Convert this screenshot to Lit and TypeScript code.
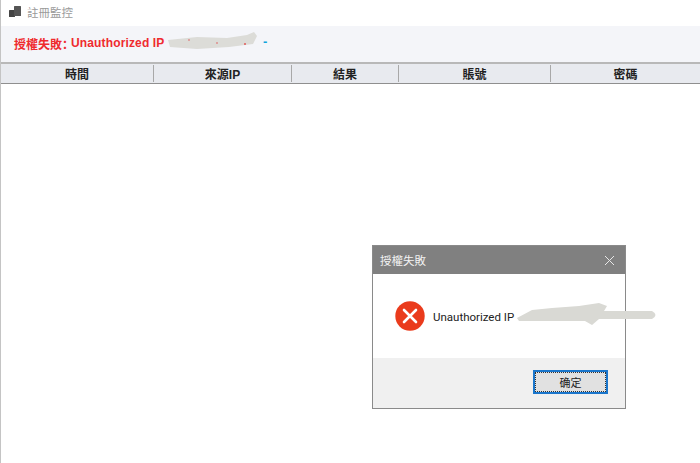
import { LitElement, html, css, svg } from "lit";
import { customElement } from "lit/decorators.js";

const COLS: [string, number][] = [
  ["時間", 153],
  ["來源IP", 138],
  ["結果", 107],
  ["賬號", 152],
  ["密碼", 149],
];

@customElement("app-root")
export class AppRoot extends LitElement {
  static styles = css`
    :host {
      display: block;
      position: relative;
      width: 700px;
      height: 463px;
      overflow: hidden;
      background: #fff;
      font-family: "Liberation Sans", "Noto Sans CJK TC", sans-serif;
      box-sizing: border-box;
      border-left: 1px solid #c4c4c4;
    }
    .title {
      height: 26px;
      display: flex;
      align-items: center;
      gap: 6px;
      padding: 0 0 3px 8px;
      font-size: 11.5px;
      color: #9a9a9a;
      box-sizing: border-box;
    }
    .title svg { display: block; }
    .status {
      height: 36px;
      background: #f4f5f9;
      display: flex;
      align-items: center;
      padding: 0 0 2px 13px;
      box-sizing: border-box;
      font-size: 12px;
      font-weight: 700;
      color: #ef2b2f;
      white-space: pre;
      position: relative;
    }
    .colon {
      font-family: "Noto Sans CJK SC", sans-serif;
      letter-spacing: -3px;
    }
    .ip { letter-spacing: 0.14px; }
    .dash {
      color: #12a5dc;
      position: absolute;
      left: 262px;
      top: 8px;
      font-size: 13px;
    }
    .smudge { position: absolute; pointer-events: none; }
    .s1 { left: 166px; top: 6px; }
    .head {
      display: flex;
      height: 22px;
      background: #e8eaef;
      border-top: 2px solid #b8b8b8;
      border-bottom: 1px solid #8f8f8f;
      padding-bottom: 1px;
      box-sizing: border-box;
      font-size: 12px;
      font-weight: 700;
      color: #222;
    }
    .cell {
      display: flex;
      align-items: center;
      justify-content: center;
      box-sizing: border-box;
      border-right: 1px solid #a8a8a8;
      margin: 1px 0 0;
      flex: none;
    }
    .cell:last-child { border-right: none; }
    .dialog {
      position: absolute;
      left: 371px;
      top: 245px;
      width: 254px;
      height: 164px;
      box-sizing: border-box;
      border: 1px solid #8a8a8a;
      background: #fff;
      display: flex;
      flex-direction: column;
    }
    .dlg-title {
      height: 28px;
      flex: none;
      background: #808080;
      color: #f2f2f2;
      display: flex;
      align-items: center;
      justify-content: space-between;
      padding: 0 10px 0 7px;
      font-size: 11.5px;
    }
    .dlg-body {
      flex: 1;
      display: flex;
      align-items: center;
      gap: 8px;
      padding: 0 0 1px 22px;
      font-family: Roboto, "Liberation Sans", sans-serif;
      font-size: 11.5px;
      color: #222;
      position: relative;
      box-sizing: border-box;
    }
    .dlg-body span { position: relative; top: 1px; }
    .s2 { left: 144px; top: 29px; position: absolute; }
    .dlg-body svg.x { display: block; flex: none; }
    .dlg-foot {
      height: 50px;
      flex: none;
      background: #f0f0f0;
      display: flex;
      justify-content: flex-end;
      align-items: flex-start;
      padding: 12px 17px 0 0;
      box-sizing: border-box;
    }
    .btn {
      width: 75px;
      height: 24px;
      box-sizing: border-box;
      border: 2px solid #1a76cc;
      background: #e1e1e1;
      outline: 1px dotted #333;
      outline-offset: -3px;
      font: 11px "Liberation Sans", "Noto Sans CJK SC", sans-serif;
      color: #222;
      padding: 0;
    }
  `;

  render() {
    return html`
      <div class="title">
        <svg width="12" height="12" viewBox="0 0 12 12">
          <rect x="0" y="4" width="6" height="7" rx="0.5" fill="#444"></rect>
          <rect x="5" y="0" width="7" height="10" rx="0.5" fill="#555"></rect>
        </svg>
        <span>註冊監控</span>
      </div>
      <div class="status">授權失敗<span class="colon">：</span><span class="ip">Unauthorized IP</span><span class="dash">-</span>
        <svg class="smudge s1" width="92" height="20" viewBox="0 0 92 20">
          ${svg`<path d="M1 8 L30 5 L60 6 L80 3 L87 0 L90 4 L86 12 L62 15 L30 17 L3 15 Z" fill="#dcdcd8"></path>
          <circle cx="22" cy="8" r="0.8" fill="#e05a5a"></circle>
          <circle cx="50" cy="11" r="0.8" fill="#e05a5a"></circle>
          <circle cx="78" cy="12" r="1" fill="#e05a5a"></circle>`}
        </svg>
      </div>
      <div class="head">
        ${COLS.map(([t, w]) => html`<div class="cell" style="width:${w}px">${t}</div>`)}
      </div>
      <div class="dialog">
        <div class="dlg-title">
          <span>授權失敗</span>
          <svg width="11" height="11" viewBox="0 0 11 11">
            <path d="M1 1 L10 10 M10 1 L1 10" stroke="#e8e8e8" stroke-width="1" fill="none"></path>
          </svg>
        </div>
        <div class="dlg-body">
          <svg class="x" width="30" height="30" viewBox="0 0 30 30">
            <circle cx="15" cy="15" r="14.7" fill="#ea3b1c"></circle>
            <path d="M9 9 L21 21 M21 9 L9 21" stroke="#fff" stroke-width="2.6" stroke-linecap="round" fill="none"></path>
          </svg>
          <span>Unauthorized IP</span>
          <svg class="s2" width="142" height="23" viewBox="0 0 142 23">
            ${svg`<path d="M0 15 L15 7 L35 5 L62 3 L82 0 L90 3 L87 8 L135 8 Q142 12 135 16 L82 16 L75 22 L68 18 L2 18 Z" fill="#d9d9d4"></path>`}
          </svg>
        </div>
        <div class="dlg-foot">
          <button class="btn">确定</button>
        </div>
      </div>
    `;
  }
}
